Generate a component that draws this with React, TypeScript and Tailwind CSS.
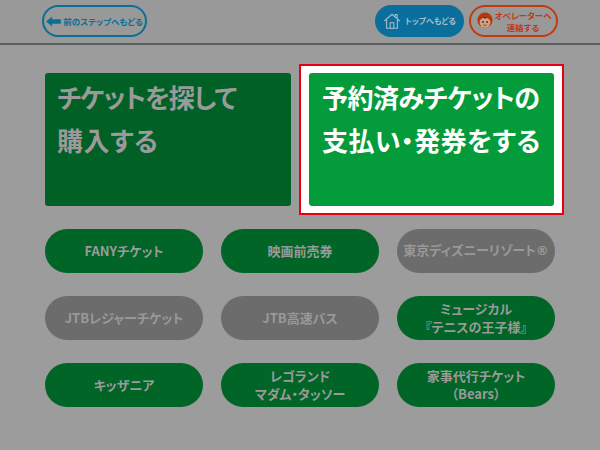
const cjk = "font-['Noto_Sans_CJK_JP','Noto_Sans',sans-serif] [font-feature-settings:'palt']";

type Pill = { lines: string[]; off?: boolean };

const pills: Pill[] = [
  { lines: ["FANYチケット"] },
  { lines: ["映画前売券"] },
  { lines: ["東京ディズニーリゾート"], off: true },
  { lines: ["JTBレジャーチケット"], off: true },
  { lines: ["JTB高速バス"], off: true },
  { lines: ["ミュージカル", "『テニスの王子様』"] },
  { lines: ["キッザニア"] },
  { lines: ["レゴランド", "マダム・タッソー"] },
  { lines: ["家事代行チケット", "（Bears）"] },
];

function HomeIcon() {
  return (
    <svg viewBox="0 0 20 20" className="w-[18px] h-[18px] shrink-0" fill="none" stroke="#a9bcc6" strokeWidth="1.2">
      <path d="M1.5 10 10 2.5 18.5 10" />
      <path d="M13.5 5V2.8h2.2v4.2" />
      <path d="M4 8.5V18h12V8.5" />
      <path d="M8 18v-6h4v6" />
    </svg>
  );
}

function OperatorIcon() {
  return (
    <svg viewBox="0 0 20 20" className="w-[18px] h-[18px] shrink-0">
      <circle cx="10" cy="9" r="8.5" fill="#b8360e" />
      <circle cx="10" cy="11.5" r="6" fill="#d3a283" />
      <path d="M4.5 9C6 6.5 8 6 10 7.5 12 6 14 6.5 15.5 9 15 4.5 5 4.5 4.5 9Z" fill="#7a240a" />
      <circle cx="7.7" cy="11" r="1" fill="#3a2a20" />
      <circle cx="12.3" cy="11" r="1" fill="#3a2a20" />
      <path d="M8 14.2c1.2 1 2.8 1 4 0" stroke="#a83010" strokeWidth="1" fill="none" />
    </svg>
  );
}

export default function App() {
  return (
    <div className={`w-[600px] h-[450px] overflow-hidden bg-[#9c9c9c] ${cjk}`}>
      <header className="h-[45px] bg-[#999999] border-b-2 border-[#5a5d60] flex items-start pt-[5px] pl-[42px] pr-[42px]">
        <div className="w-[105px] h-[32px] rounded-full border-2 border-[#0a6f96] flex items-center justify-center gap-[2px] text-[#0a6f96] text-[8.5px] font-bold whitespace-nowrap">
          <svg viewBox="0 0 16 12" className="w-[15px] h-[11px] shrink-0" fill="#0a6f96">
            <path d="M0 6 6.5 0.5V3.5H16V8.5H6.5V11.5Z" />
          </svg>
          前のステップへもどる
        </div>
        <div className="ml-auto w-[89px] h-[32px] rounded-full bg-[#0a6f9c] flex items-center justify-center gap-[4px] text-[#a9bcc6] text-[8px] font-bold whitespace-nowrap">
          <HomeIcon />
          トップへもどる
        </div>
        <div className="ml-[5px] w-[89px] h-[32px] rounded-full border-2 border-[#c23a10] flex items-center justify-center gap-[1px] text-[#c23a10] text-[8.5px] font-bold leading-[12px] whitespace-nowrap">
          <OperatorIcon />
          <div className="text-center">
            <div>オペレーターへ</div>
            <div>連絡する</div>
          </div>
        </div>
      </header>

      <main className="pl-[45px] pt-[28px]">
        <div className="flex gap-[18px]">
          <div className="w-[246px] h-[133px] rounded-[3px] bg-[#006026] pl-[12px] pt-[2px] text-[#9a9a9a] text-[26px] font-bold leading-[43px]">
            <div className="tracking-[-1.2px]">チケットを探して</div>
            <div className="tracking-[0.5px]">購入する</div>
          </div>
          <div className="-mx-[10px] -my-[9px] border-2 border-[#e60012] bg-white px-[8px] py-[7px]">
            <div className="w-[245px] h-[133px] rounded-[3px] bg-[#049c3a] pl-[13px] pt-[2px] text-white text-[26px] font-bold leading-[43px] whitespace-nowrap">
              <div className="tracking-[-0.5px]">予約済みチケットの</div>
              <div className="tracking-[0.4px]">支払い・発券をする</div>
            </div>
          </div>
        </div>

        <div className="grid grid-cols-[158px_158px_158px] gap-x-[18px] gap-y-[23.5px] mt-[23px]">
          {pills.map((p) => (
            <div
              key={p.lines[0]}
              className={`h-[43.5px] rounded-full flex flex-col items-center justify-center text-[13px] font-bold leading-[18px] whitespace-nowrap ${
                p.off ? "bg-[#6c6c6c] text-[#999999]" : "bg-[#006526] text-[#9a9a9a]"
              }`}
            >
              {p.lines.map((l) => (
                <div key={l}>
                  {l}
                  {l.startsWith("東京") && <span className="font-['DejaVu_Sans',sans-serif]">®</span>}
                </div>
              ))}
            </div>
          ))}
        </div>
      </main>
    </div>
  );
}
